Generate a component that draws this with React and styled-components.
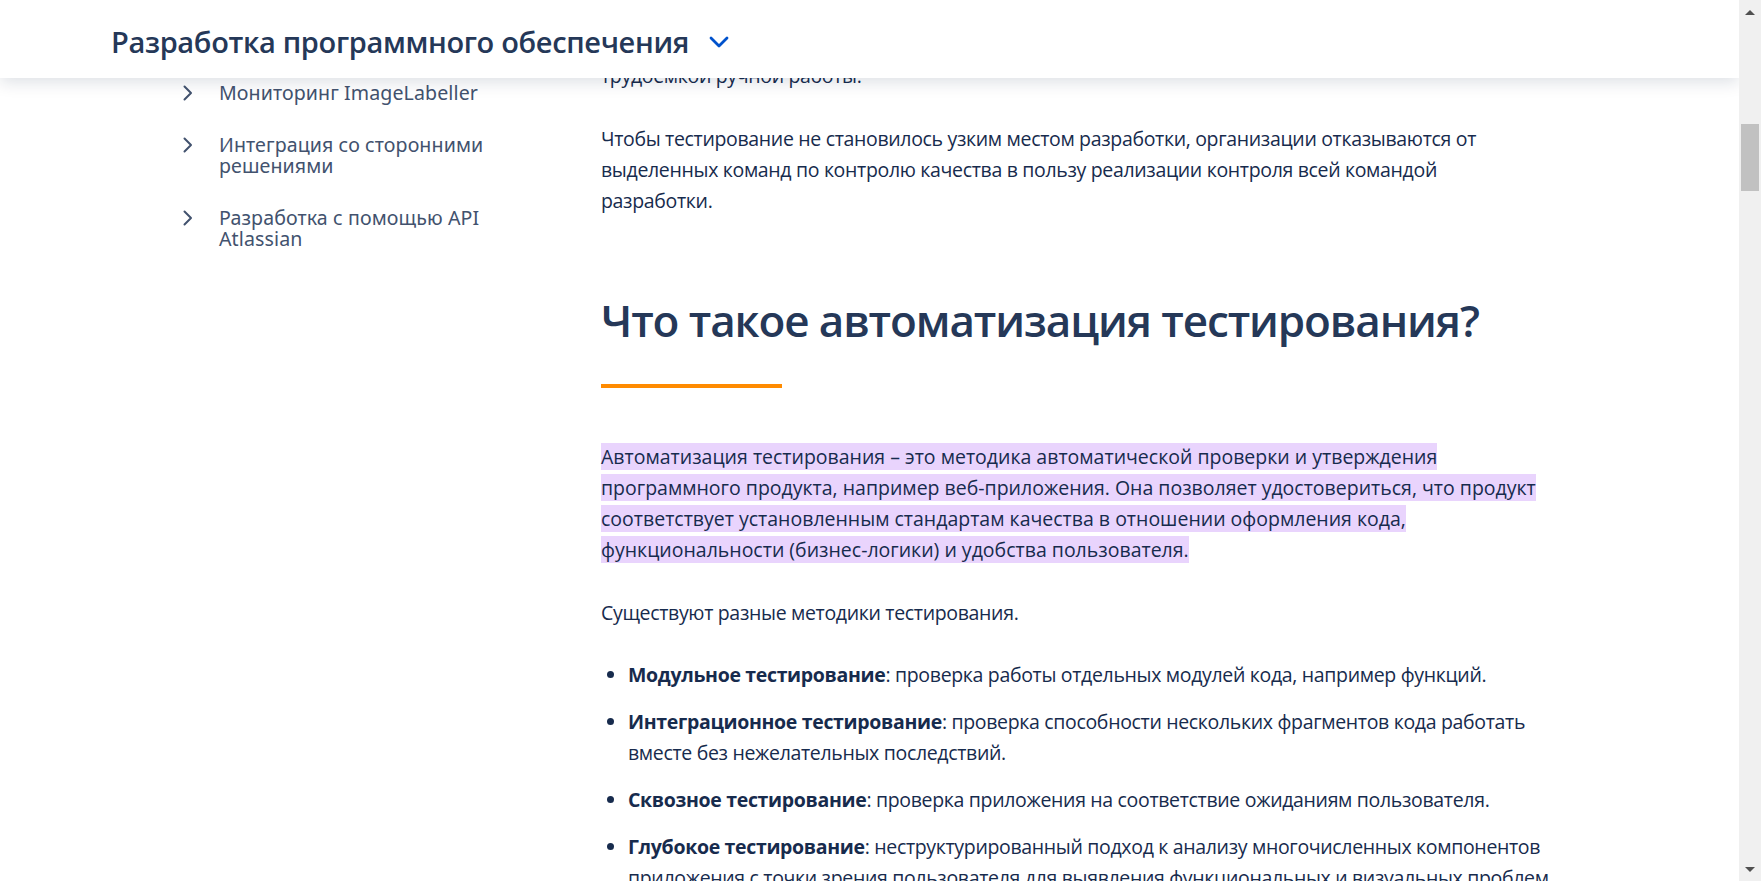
import styled, { createGlobalStyle } from "styled-components";

const GlobalStyle = createGlobalStyle`
    html, body {
        margin: 0;
        padding: 0;
        background: #ffffff;
    }
    body {
        font-family: "Open Sans", "Noto Sans", sans-serif;
        color: #172b4d;
    }
`;

const sideLinks = [
    ["Мониторинг ImageLabeller"],
    ["Интеграция со сторонними", "решениями"],
    ["Разработка с помощью API", "Atlassian"],
];

const testTypes = [
    {
        title: "Модульное тестирование",
        lines: ["проверка работы отдельных модулей кода, например функций."],
    },
    {
        title: "Интеграционное тестирование",
        lines: [
            "проверка способности нескольких фрагментов кода работать",
            "вместе без нежелательных последствий.",
        ],
    },
    {
        title: "Сквозное тестирование",
        lines: ["проверка приложения на соответствие ожиданиям пользователя."],
    },
    {
        title: "Глубокое тестирование",
        lines: [
            "неструктурированный подход к анализу многочисленных компонентов",
            "приложения с точки зрения пользователя для выявления функциональных и визуальных проблем.",
        ],
    },
];

function Lines({ lines }) {
    return lines.map((line, i) => (
        <span key={i}>
            {line}
            {i < lines.length - 1 && <br />}
        </span>
    ));
}

function ChevronRight() {
    return (
        <svg width="11" height="18" viewBox="0 0 11 18" fill="none">
            <path d="M2.5 2.5l6.5 6.5-6.5 6.5" stroke="#42526e" strokeWidth="2" strokeLinecap="round" strokeLinejoin="round" />
        </svg>
    );
}

function ChevronDown() {
    return (
        <svg width="20" height="12" viewBox="0 0 20 12" fill="none">
            <path d="M2 2l8 8 8-8" stroke="#0052cc" strokeWidth="2.8" strokeLinecap="round" strokeLinejoin="round" />
        </svg>
    );
}

function App() {
    return (
        <>
            <GlobalStyle />
            <Viewport>
                <Page>
                    <Header>
                        <HeaderTitle>Разработка программного обеспечения</HeaderTitle>
                        <HeaderToggle>
                            <ChevronDown />
                        </HeaderToggle>
                    </Header>
                    <Columns>
                        <Sidebar>
                            {sideLinks.map((link, i) => (
                                <SideItem key={i}>
                                    <SideIcon>
                                        <ChevronRight />
                                    </SideIcon>
                                    <SideText>
                                        <Lines lines={link} />
                                    </SideText>
                                </SideItem>
                            ))}
                        </Sidebar>
                        <Article>
                            <Paragraph>трудоемкой ручной работы.</Paragraph>
                            <Paragraph>
                                <Lines
                                    lines={[
                                        "Чтобы тестирование не становилось узким местом разработки, организации отказываются от",
                                        "выделенных команд по контролю качества в пользу реализации контроля всей командой",
                                        "разработки.",
                                    ]}
                                />
                            </Paragraph>
                            <Heading>Что такое автоматизация тестирования?</Heading>
                            <Accent />
                            <Paragraph $lead>
                                <Highlight>
                                    Автоматизация тестирования – это методика автоматической проверки и утверждения
                                    <br />
                                    программного продукта, например веб-приложения. Она позволяет удостовериться, что продукт
                                    <br />
                                    соответствует установленным стандартам качества в отношении оформления кода,
                                    <br />
                                    функциональности (бизнес-логики) и удобства пользователя.
                                </Highlight>
                            </Paragraph>
                            <Paragraph $beforeList>Существуют разные методики тестирования.</Paragraph>
                            <BulletList>
                                {testTypes.map((item) => (
                                    <BulletItem key={item.title}>
                                        <strong>{item.title}</strong>: <Lines lines={item.lines} />
                                    </BulletItem>
                                ))}
                            </BulletList>
                        </Article>
                    </Columns>
                </Page>
                <Scrollbar>
                    <ScrollArrow $down={false} />
                    <ScrollTrack>
                        <ScrollThumb />
                    </ScrollTrack>
                    <ScrollArrow $down />
                </Scrollbar>
            </Viewport>
        </>
    );
}

export default App;

// Styles

const Viewport = styled.div`
    display: flex;
    height: 881px;
    overflow: hidden;
`;

const Page = styled.div`
    flex: 1;
    position: relative;
    overflow: hidden;
`;

const Header = styled.header`
    position: absolute;
    top: 0;
    left: 0;
    right: 0;
    height: 78px;
    z-index: 2;
    background: #ffffff;
    box-shadow: 0 4px 16px rgba(9, 30, 66, 0.14);
    display: flex;
    align-items: center;
    gap: 20px;
    padding: 5px 0 0 111px;
    box-sizing: border-box;
`;

const HeaderTitle = styled.h1`
    margin: 0;
    font-size: 29px;
    font-weight: 600;
    color: #253858;
    letter-spacing: -0.35px;
`;

const HeaderToggle = styled.span`
    display: flex;
    align-items: center;
    margin-top: 1px;
`;

const Columns = styled.div`
    display: grid;
    grid-template-columns: 419px 940px;
    padding: 60px 0 0 182px;
`;

const Sidebar = styled.nav`
    display: flex;
    flex-direction: column;
    gap: 30px;
    padding-top: 22px;
`;

const SideItem = styled.div`
    display: flex;
    align-items: flex-start;
    gap: 26px;
`;

const SideIcon = styled.span`
    display: flex;
    padding-top: 2px;
`;

const SideText = styled.span`
    font-family: "Noto Sans", "Open Sans", sans-serif;
    font-size: 19.6px;
    line-height: 21.5px;
    letter-spacing: 0.1px;
    color: #42526e;
`;

const Article = styled.article`
    display: flex;
    flex-direction: column;
    font-size: 19.5px;
    line-height: 31px;
    color: #172b4d;
    letter-spacing: -0.33px;
`;

const Paragraph = styled.p`
    margin: 0 0 32px;
    white-space: nowrap;
    ${(p) => p.$lead && "margin-top: 53px;"}
    ${(p) => p.$beforeList && "margin-bottom: 31px;"}
`;

const Heading = styled.h2`
    margin: 44px 0 36px;
    font-size: 44px;
    line-height: 56px;
    font-weight: 600;
    color: #253858;
    letter-spacing: -1.1px;
    white-space: nowrap;
`;

const Accent = styled.div`
    width: 181px;
    height: 4px;
    background: #ff8b00;
`;

const Highlight = styled.span`
    background: #e9d4fd;
    letter-spacing: 0;
`;

const BulletList = styled.ul`
    margin: 0;
    padding-left: 27px;
    display: flex;
    flex-direction: column;
    gap: 16px;
`;

const BulletItem = styled.li`
    white-space: nowrap;

    strong {
        font-weight: 700;
    }
`;

const Scrollbar = styled.div`
    width: 22px;
    background: #f0f0f0;
    display: flex;
    flex-direction: column;
    align-items: center;
`;

const ScrollArrow = styled.div`
    height: 24px;
    width: 100%;
    display: flex;
    align-items: center;
    justify-content: center;

    &::before {
        content: "";
        border-left: 5px solid transparent;
        border-right: 5px solid transparent;
        ${(p) =>
            p.$down
                ? "border-top: 5px solid #505050;"
                : "border-bottom: 5px solid #505050;"}
    }
`;

const ScrollTrack = styled.div`
    flex: 1;
    width: 100%;
    padding-top: 100px;
    box-sizing: border-box;
    display: flex;
    justify-content: center;
`;

const ScrollThumb = styled.div`
    width: 18px;
    height: 67px;
    background: #c1c1c1;
`;
